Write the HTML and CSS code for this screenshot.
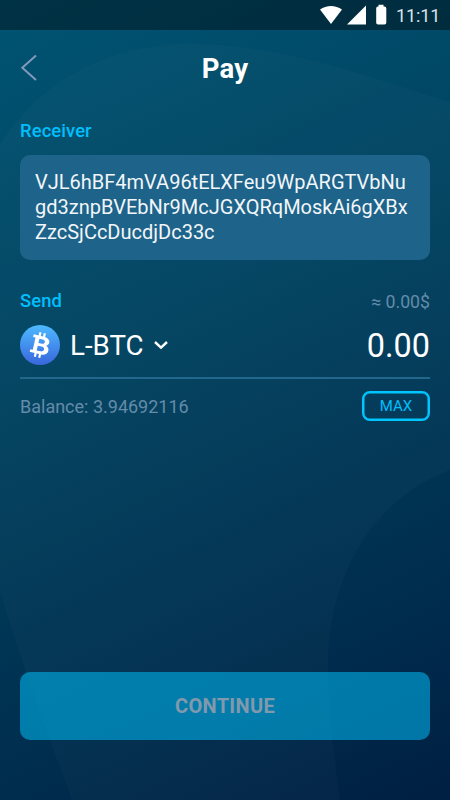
FILE: index.html
```html
<!DOCTYPE html>
<html lang="en">
<head>
<meta charset="utf-8">
<title>Pay</title>
<link rel="stylesheet" href="styles.css">
</head>
<body>
<div class="screen">
  <svg class="backdrop" viewBox="0 0 450 800" aria-hidden="true">
    <path d="M0 145C40 80 110 44 190 44C285 44 375 79 450 102V470C370 500 328 580 328 665C328 715 335 760 340 800H72C50 740 17 650 0 590Z" fill="#fff" fill-opacity=".02"/>
  </svg>
  <div class="status">
    <svg class="indicators" width="76" height="30" viewBox="0 0 76 30" fill="#fff" aria-hidden="true">
      <path d="M0 9.500C6.500 4.700 15.500 4.700 22 9.500L11 24Z"/>
      <path d="M46 5.500V24.500H27Z"/>
      <path d="M58.500 4.800H63.500V6.500H64.500Q66.300 6.500 66.300 8.300V22.700Q66.300 24.500 64.500 24.500H58Q56.200 24.500 56.200 22.700V8.300Q56.200 6.500 58 6.500H58.500Z"/>
    </svg>
    <span class="clock">11:11</span>
  </div>
  <header class="header">
    <svg class="back" width="18" height="28" viewBox="0 0 18 28" fill="none" stroke="#8299bc" stroke-width="2" aria-hidden="true"><path d="M16 1.500L2.300 13.700L16 26"/></svg>
    <h1 class="title">Pay</h1>
  </header>
  <main class="content">
    <div class="label receiver">Receiver</div>
    <div class="address">VJL6hBF4mVA96tELXFeu9WpARGTVbNu<br>gd3znpBVEbNr9McJGXQRqMoskAi6gXBx<br>ZzcSjCcDucdjDc33c</div>
    <div class="row send"><span class="label">Send</span><span class="fiat">≈ 0.00$</span></div>
    <div class="row asset">
      <svg class="coin" width="40" height="40" viewBox="0 0 40 40" aria-hidden="true">
        <defs><linearGradient id="coin" x1="0" y1="0" x2="0" y2="1"><stop stop-color="#4dbaff"/><stop offset="1" stop-color="#3966dc"/></linearGradient></defs>
        <circle cx="20" cy="20" r="20" fill="url(#coin)"/>
        <g transform="rotate(13 20 20)" fill="#fff">
          <path fill-rule="evenodd" d="M11.500 11H22C29 11 30.300 17 26.300 19.300C31.500 21.500 30.300 29 23 29H11.500V26.200H14V13.800H11.500ZM18 14V18.300H21.500C25 18.300 25 14 21.500 14ZM18 21.200V26H22C26 26 26 21.200 22 21.200Z"/>
          <path d="M16.500 7.500H18.700V11.500H16.500ZM21 7.500H23.200V11.500H21ZM16.500 28.500H18.700V32.500H16.500ZM21 28.500H23.200V32.500H21Z"/>
        </g>
      </svg>
      <span class="ticker">L-BTC</span>
      <svg class="chevron" width="14" height="10" viewBox="0 0 14 10" fill="none" stroke="#fff" stroke-width="2.400" aria-hidden="true"><path d="M1 2L7 7.600L13 2"/></svg>
      <span class="amount">0.00</span>
    </div>
    <div class="row balance"><span>Balance: 3.94692116</span><button class="max">MAX</button></div>
  </main>
  <button class="continue" disabled>CONTINUE</button>
</div>
</body>
</html>
```

FILE: styles.css
```css
* { box-sizing: border-box; }

body { margin: 0; font-family: Roboto, "Liberation Sans", sans-serif; }

button { margin: 0; padding: 0; font-family: inherit; }

.screen {
  position: relative;
  isolation: isolate;
  display: flex;
  flex-direction: column;
  width: 450px;
  height: 800px;
  overflow: hidden;
  background: linear-gradient(155deg, #005473 0%, #00425f 42%, #002d4e 78%, #001f42 100%);
}

.backdrop { position: absolute; inset: 0; z-index: -1; }

.status {
  display: flex;
  height: 30px;
  padding-left: 320px;
  background: rgba(0, 0, 0, .4);
}

.indicators { flex: none; }

.clock {
  font-size: 18px;
  line-height: 31px;
  letter-spacing: -.1px;
  color: #dce1e8;
}

.header {
  display: grid;
  grid-template-columns: 20px 1fr 20px;
  align-items: center;
  height: 76px;
  padding: 0 20px;
}

.title {
  margin: 0;
  padding-top: 1px;
  font-size: 27.500px;
  line-height: 32px;
  font-weight: 700;
  letter-spacing: .2px;
  text-align: center;
  color: #fff;
}

.content { padding: 14px 20px 0; }

.label {
  font-size: 18.400px;
  line-height: 22px;
  font-weight: 500;
  letter-spacing: .1px;
  color: #00bffc;
}

.address {
  height: 105px;
  margin-top: 13px;
  padding: 15px;
  border-radius: 10px;
  background: #1e6389;
  color: #f2f6fa;
  font-size: 20px;
  line-height: 25px;
  white-space: nowrap;
}

.row { display: flex; align-items: center; }

.send { justify-content: space-between; height: 22px; margin-top: 30px; }

.fiat { font-size: 17.7px; line-height: 22px; padding-top: 1px; color: #648ba9; }

.asset {
  height: 67px;
  padding-top: 1px;
  border-bottom: 2px solid #22678c;
}

.ticker { margin-left: 10px; padding-top: 2px; font-size: 27.7px; line-height: 40px; color: #fff; }

.chevron { margin-left: 10px; }

.amount { margin-left: auto; padding-top: 1px; font-size: 32.4px; line-height: 40px; color: #fff; }

.balance {
  justify-content: space-between;
  margin-top: 12px;
  font-size: 18px;
  line-height: 22px;
  color: #648ba9;
}

.balance span { padding-top: 2px; }

.max {
  width: 68px;
  height: 30px;
  border: 2px solid #00c5ff;
  border-radius: 8px;
  background: transparent;
  box-shadow: inset 0 0 0 .5px #00c5ff;
  color: #00bffc;
  font-size: 15px;
  line-height: 26px;
}

.continue {
  height: 68px;
  margin: auto 20px 60px;
  border: 0;
  border-radius: 10px;
  background: rgba(0, 196, 255, .52);
  color: #8299ad;
  font-size: 20px;
  font-weight: 700;
  letter-spacing: .3px;
}
```
